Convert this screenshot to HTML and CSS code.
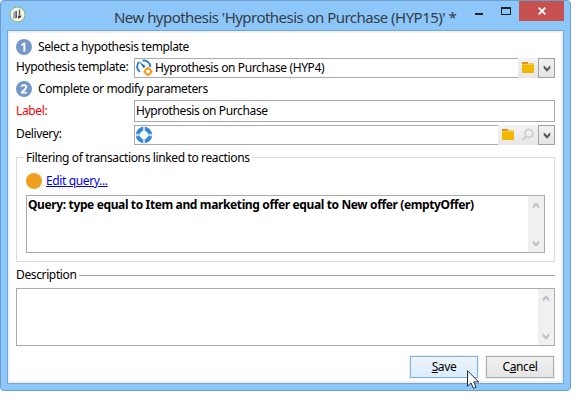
FILE: index.html
```
<!DOCTYPE html>
<html lang="en">
<head>
<meta charset="utf-8">
<title>New hypothesis</title>
<link rel="stylesheet" href="styles.css">
</head>
<body>
<svg width="0" height="0" class="defs">
  <defs>
    <symbol id="folder" viewBox="0 0 20 20"><path fill="#f08c14" d="M4 4h6v2H4z"/><path fill="#f8c468" d="M10 5h6v1h-6z"/><path fill="#f0b800" d="M4 6h12v9H4z"/><path fill="#f6cf4e" d="M4 6h12v1H4z"/></symbol>
    <symbol id="down" viewBox="0 0 8 7"><path d="M1 .8 4 3.8 7 .8V3.2L4 6.4 1 3.2z" fill="currentColor" stroke="currentColor" stroke-width=".5"/></symbol>
  </defs>
</svg>
<div class="window">
  <header class="titlebar">
    <svg class="app-icon" width="17" height="17" viewBox="0 0 17 17"><circle cx="8.500" cy="8.500" r="7.500" fill="#f5f5ee" stroke="#7db65c"/><path d="M4 12.500V7.500c.5-1.800 1.500-2.500 3-2.800v7.800z" fill="#aaa"/><path d="M7.300 5v7M10.500 3.500v5.500" stroke="#555" stroke-width="1.300"/><path d="M9 9.500h3.500c-.2 2-1.500 3-3.500 3z" fill="#444"/></svg>
    <h1 class="title">New hypothesis 'Hyprothesis on Purchase (HYP15)' *</h1>
    <div class="controls">
      <svg width="44" height="20" viewBox="0 0 44 20"><path fill="#222" d="M0 12h8v2H0z"/><path fill="#222" fill-rule="evenodd" d="M26 6h10v8H26zM27 8v5h8V8z"/></svg>
      <button class="close" aria-label="Close"><svg width="8" height="8" viewBox="0 0 8 8"><path d="M.7.7 7.300 7.300M7.300.7.7 7.300" stroke="#fff" stroke-width="1.900"/></svg></button>
    </div>
  </header>
  <main class="client">
    <div class="step"><svg width="16" height="16" viewBox="0 0 16 16"><circle cx="8" cy="8" r="8" fill="#7698c8"/><path d="M5.300 5.500 8 3.500h1.300v9H7.400V5.900L5.300 7z" fill="#fff"/></svg><span>Select a hypothesis template</span></div>
    <div class="row row-template">
      <label>Hypothesis template:</label>
      <div class="combo">
        <div class="input"><svg width="18" height="18" viewBox="0 0 18 18"><path d="M7.500 1.700A6.300 6.300 0 0 1 15.300 8M4.200 3A6.300 6.300 0 0 0 3.500 11.500" fill="none" stroke="#2a7fd0" stroke-width="1.900"/><path d="m4 2.300 6.500 5-1.700 1.900z" fill="#1d67b1"/><path d="M2.800 10.500 5 12.800" stroke="#2a7fd0" stroke-width="1.700"/><circle cx="13" cy="12.500" r="2.900" fill="#fff" stroke="#f29a1f" stroke-width="1.900"/><path d="M13 8v2M13 15v2M8.500 12.500h2M15.500 12.500h2" stroke="#f29a1f" stroke-width="2.200"/></svg><span>Hyprothesis on Purchase (HYP4)</span></div>
        <button class="tool"><svg width="20" height="20"><use href="#folder"/></svg></button>
        <button class="drop"><svg width="8" height="7"><use href="#down"/></svg></button>
      </div>
    </div>
    <div class="step"><svg width="16" height="16" viewBox="0 0 16 16"><circle cx="8" cy="8" r="8" fill="#7698c8"/><path d="M5.400 5.700C6 3.500 10.300 3.700 10.300 6c0 2.200-3.500 3.500-4.500 5.600h5" fill="none" stroke="#fff" stroke-width="1.800"/></svg><span>Complete or modify parameters</span></div>
    <div class="row row-label">
      <label class="required">Label:</label>
      <div class="input"><span>Hyprothesis on Purchase</span></div>
    </div>
    <div class="row row-delivery">
      <label>Delivery:</label>
      <div class="combo">
        <div class="input"><svg width="18" height="18" viewBox="0 0 18 18"><circle cx="9" cy="9" r="6.200" fill="none" stroke="#2e85d3" stroke-width="4"/><path d="m9 1v4M9 13v4M1 9h4M13 9h4" stroke="#b9daf3" stroke-width="2.400"/></svg></div>
        <button class="tool"><svg width="20" height="20"><use href="#folder"/></svg></button>
        <button class="tool"><svg width="20" height="20" viewBox="0 0 20 20"><circle cx="11" cy="8.500" r="4" fill="none" stroke="#cecece" stroke-width="1.900"/><path d="m8 11.500-3.500 3.700" stroke="#cecece" stroke-width="2.300"/></svg></button>
        <button class="drop"><svg width="8" height="7"><use href="#down"/></svg></button>
      </div>
    </div>
    <section class="group">
      <h2 class="legend"><span>Filtering of transactions linked to reactions</span></h2>
      <div class="edit"><i class="dot"></i><a href="#">Edit query...</a></div>
      <div class="box"><p class="query">Query: type equal to Item and marketing offer equal to New offer (emptyOffer)</p>
        <div class="scroll"><svg class="up" width="8" height="7"><use href="#down"/></svg><svg width="8" height="7"><use href="#down"/></svg></div></div>
    </section>
    <h2 class="divider"><span>Description</span></h2>
    <div class="box"><p class="query"></p>
      <div class="scroll"><svg class="up" width="8" height="7"><use href="#down"/></svg><svg width="8" height="7"><use href="#down"/></svg></div></div>
    <footer class="actions">
      <button class="btn primary"><span><u>S</u>ave</span></button>
      <button class="btn"><span>C<u>a</u>ncel</span></button>
    </footer>
  </main>
  <svg class="cursor" width="13" height="20" viewBox="0 0 13 20"><path d="M.5.8v15.400l3.500-3.300 2.400 5.400 2.700-1.100-2.400-5.300h5z" fill="#fff" stroke="#222b3c"/></svg>
</div>
</body>
</html>
```
FILE: styles.css
```
* { box-sizing: border-box; }
body { margin: 0; background: #fff; color: #000; font: 12px/16px "Noto Sans", "Open Sans", sans-serif; letter-spacing: -0.37px; overflow: hidden; }
svg { display: block; flex: none; }
.defs { position: absolute; }
h1, h2, p { margin: 0; font-size: inherit; font-weight: normal; }
button { font: inherit; letter-spacing: inherit; padding: 0; border: 0; color: inherit; }
span, label, a { white-space: nowrap; }

.window { position: relative; width: 571px; height: 391px; background: #8dc6f9; border: 1px solid #6b9ecb; border-radius: 4px; padding: 0 6px 6px; display: flex; flex-direction: column; }
.titlebar { height: 29px; flex: none; display: flex; }
.app-icon { margin: 5px 0 0 2px; }
.title { flex: 1; min-width: 0; margin-left: 88px; padding-top: 3px; font-size: 15px; line-height: 26px; letter-spacing: -0.53px; white-space: nowrap; color: #333d46; }
.controls { display: flex; }
.close { width: 45px; height: 20px; background: #c75050; display: flex; align-items: center; justify-content: center; }

.client { flex: 1; background: #fff; border: 1px solid #6fa7d9; box-shadow: inset 0 0 0 2px #f0f0f0; padding: 8px 8px 0; display: flex; flex-direction: column; }
.step { display: flex; height: 16px; gap: 6px; flex: none; }
.row { display: flex; flex: none; align-items: stretch; }
.row label { width: 118px; flex: none; }
.row-template { height: 20px; margin: 3px 0; }
.row-template label { padding-top: 1px; }
.row-label { height: 22px; margin: 3px 0; }
.row-label label { padding-top: 3px; }
.row-delivery { height: 20px; }
.row-delivery label { padding-top: 1px; }
.required { color: #f00; }
.combo { display: flex; flex: 1; }
.input { flex: 1; border: 1px solid #a9a9af; display: flex; align-items: center; padding-left: 1px; background: #fff; }
.combo .input { border-right: 0; padding-left: 0; gap: 2px; }
.combo .input span { padding-bottom: 1px; }
.row-label .input { padding-bottom: 1px; }
.tool { width: 20px; background: linear-gradient(#f3f3f3, #e7e7e7); }
.drop { width: 17px; border: 1px solid #a0a0a4; background: linear-gradient(#f1f1f1, #e4e4e4); color: #555; display: flex; align-items: center; justify-content: center; }

.group { flex: none; height: 105px; margin-top: 12px; border: 1px solid #dcdcdc; padding: 0 9px; }
.legend { height: 16px; margin: -8px 0 7px -2px; line-height: 16px; }
.legend span { background: #fff; padding: 0 2px; display: inline-block; }
.edit { display: flex; gap: 4px; height: 16px; margin-bottom: 6px; }
.dot { width: 16px; height: 16px; border-radius: 50%; background: #f0a020; }
.edit a { color: #0000f0; }
.box { display: flex; flex: none; height: 58px; border: 1px solid #a9a9af; background: #fff; }
.query { flex: 1; font-weight: bold; padding: 1px; white-space: nowrap; }
.scroll { width: 16px; background: #f0f0f0; color: #bfbfbf; display: flex; flex-direction: column; align-items: center; justify-content: space-between; padding: 6px 0 5px; }
.up { transform: scaleY(-1); }

.divider { display: flex; align-items: center; gap: 2px; height: 16px; margin: 5px 0; }
.divider::after { content: ""; flex: 1; height: 1px; background: #a0a0a0; }
.actions { display: flex; justify-content: flex-end; gap: 8px; margin-top: 10px; padding-right: 1px; }
.btn { width: 68px; height: 22px; border: 1px solid #acacac; background: linear-gradient(#f1f1f1, #e4e4e4); box-shadow: 0 0 0 1px #f0f0f0; }
.primary { border-color: #7eb4ea; background: linear-gradient(#ecf4fc, #dcecfc); }
.cursor { position: absolute; left: 466px; top: 369px; }
```
